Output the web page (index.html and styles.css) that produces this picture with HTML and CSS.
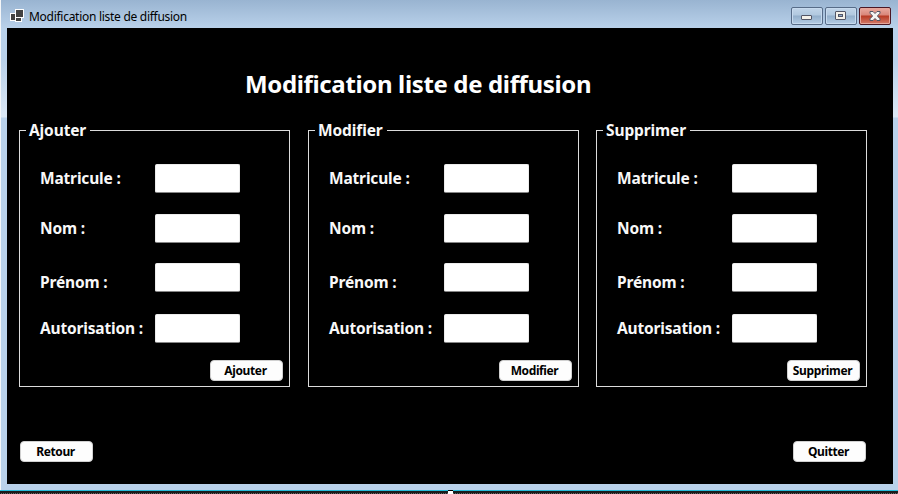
FILE: index.html
```
<!DOCTYPE html>
<html lang="fr">
<head>
<meta charset="utf-8">
<title>Modification liste de diffusion</title>
<link rel="stylesheet" href="styles.css">
</head>
<body>
<div class="window">
  <header class="titlebar">
    <svg class="app-icon" width="14" height="13" viewBox="0 0 14 13" shape-rendering="crispEdges">
      <path fill="#fff" d="M5 0h9v9h-2v4H5v-1H0V4h5z"/>
      <path fill="#424242" d="M6 1h7v7H6zM1 5h4v6H1zM6 9h5v3H6z"/>
    </svg>
    <span class="caption"><span>Modification liste de diffusion</span></span>
    <div class="controls">
      <div class="control">
        <svg width="11" height="5" viewBox="0 0 11 5"><rect x=".5" y=".5" width="10" height="4" rx=".5" fill="#f4f1ea" stroke="#535666"/></svg>
      </div>
      <div class="control max">
        <svg width="11" height="9" viewBox="0 0 11 9"><rect x=".5" y=".5" width="10" height="8" rx=".5" fill="#f4f1ea" stroke="#535666"/><rect x="3.5" y="3.5" width="4" height="2" fill="#8eabca" stroke="#535666"/></svg>
      </div>
      <div class="control close">
        <svg width="12" height="10" viewBox="0 0 12 10"><path d="M1 .5h3l2 2 2-2h3v1.7L8.400 5 11 7.800v1.700H8l-2-2-2 2H1V7.800L3.600 5 1 2.200z" fill="#f5f4f4" stroke="#535666"/></svg>
      </div>
    </div>
  </header>
  <main class="form">
    <h1 class="title"><span>Modification liste de diffusion</span></h1>
    <div class="groups">
      <section class="group">
        <h2 class="legend"><span>Ajouter</span></h2>
        <div class="row r1"><label class="lbl">Matricule :</label><input class="field"></div>
        <div class="row r2"><label class="lbl">Nom :</label><input class="field"></div>
        <div class="row r3"><label class="lbl">Prénom :</label><input class="field"></div>
        <div class="row r4"><label class="lbl">Autorisation :</label><input class="field"></div>
        <button class="btn">Ajouter</button>
      </section>
      <section class="group">
        <h2 class="legend"><span>Modifier</span></h2>
        <div class="row r1"><label class="lbl">Matricule :</label><input class="field"></div>
        <div class="row r2"><label class="lbl">Nom :</label><input class="field"></div>
        <div class="row r3"><label class="lbl">Prénom :</label><input class="field"></div>
        <div class="row r4"><label class="lbl">Autorisation :</label><input class="field"></div>
        <button class="btn">Modifier</button>
      </section>
      <section class="group">
        <h2 class="legend"><span>Supprimer</span></h2>
        <div class="row r1"><label class="lbl">Matricule :</label><input class="field"></div>
        <div class="row r2"><label class="lbl">Nom :</label><input class="field"></div>
        <div class="row r3"><label class="lbl">Prénom :</label><input class="field"></div>
        <div class="row r4"><label class="lbl">Autorisation :</label><input class="field"></div>
        <button class="btn">Supprimer</button>
      </section>
    </div>
    <footer class="actions"><button class="btn">Retour</button><button class="btn">Quitter</button></footer>
  </main>
</div>
<div class="edge"><div class="handle"></div></div>
</body>
</html>
```
FILE: styles.css
```
* { box-sizing: border-box; }
body {
  margin: 0;
  width: 898px;
  height: 494px;
  overflow: hidden;
  background: #1c1c1c;
  font-family: "Noto Sans", "Open Sans", sans-serif;
}
.window {
  height: 490px;
  padding: 0 5px 6px 7px;
  background:
    linear-gradient(#f4f6f8, #f4f6f8) 0 0 / 1px 100% no-repeat,
    linear-gradient(#99b4d1 0, #b9d1ea 28px, #b9d1ea 60px, #dce8f5 117px, #b9d1ea 118px);
}
.titlebar {
  height: 28px;
  display: flex;
  align-items: flex-start;
  padding-left: 3px;
}
.app-icon { flex: none; margin-top: 9px; }
.caption {
  margin-left: 5px;
  padding-top: 8px;
  font-size: 12px;
  line-height: 17px;
  letter-spacing: -0.28px;
  color: #000;
  flex: 1;
}
.controls { display: flex; gap: 2px; margin: 7px 2px 0 0; }
.control {
  width: 32px;
  height: 18px;
  border: 1px solid #576c88;
  border-radius: 2px;
  box-shadow: inset 0 0 0 1px #c7daee;
  background: linear-gradient(#c1d5e9 0, #b1c8df 7px, #93afcb 8px, #b8d0e8 17px);
  display: flex;
  justify-content: center;
  padding: 7px 1px 0 0;
}
.max { padding-top: 3px; }
.close {
  padding-top: 3px;
  border-color: #4b1724;
  box-shadow: inset 0 0 0 1px #e5a69b;
  background: linear-gradient(#e9aaa0 0, #d9867a 7px, #b83a24 8px, #d68373 17px);
}
.form {
  height: 456px;
  background: #000;
  padding: 0 26px 0 12px;
  color: #f8f8f8;
}
.title {
  margin: 0;
  padding: 40px 0 0 226px;
  height: 102px;
  font-size: 24px;
  line-height: 32px;
  font-weight: 700;
  letter-spacing: -0.35px;
  color: #fff;
  white-space: nowrap;
}
.groups { display: grid; grid-template-columns: 289px 288px 271px; }
.group {
  width: 271px;
  height: 257px;
  border: 1px solid #dcdcdc;
  padding-left: 20px;
}
.legend {
  width: fit-content;
  height: 22px;
  margin: -12px 0 0 -14px;
  padding: 0 4px 0 3px;
  background: #000;
  font-size: 15.5px;
  line-height: 22px;
  font-weight: 700;
  letter-spacing: -0.12px;
}
.row {
  display: grid;
  grid-template-columns: 115px 85px;
  height: 29px;
  margin-top: 21px;
}
.r1 { margin-top: 23px; }
.r3 { margin-top: 20px; }
.r4 { margin-top: 22px; }
.lbl {
  font-size: 15.5px;
  line-height: 28px;
  font-weight: 700;
  letter-spacing: -0.17px;
  white-space: nowrap;
}
.r3 .lbl { padding-top: 5px; }
.field {
  width: 85px;
  height: 29px;
  border: 1px solid #ececec;
  border-bottom-color: #868686;
  border-radius: 2px;
  background: #fff;
  padding: 0 4px;
}
.btn {
  display: block;
  width: 73px;
  height: 21px;
  padding: 0 2px 0 0;
  border: 1px solid #d0d0d0;
  border-radius: 4px;
  background: #fdfdfd;
  color: #000;
  font: 700 12px/17px "Noto Sans", "Open Sans", sans-serif;
  letter-spacing: -0.38px;
  white-space: nowrap;
}
.group .btn { margin: 17px 0 0 170px; }
.actions {
  display: flex;
  justify-content: space-between;
  margin: 54px 0 0 1px;
}
.actions .btn:last-child { margin-right: 1px; }
.edge {
  height: 4px;
  border-top: 1px solid #25bddc;
  background: repeating-linear-gradient(90deg, #1c1c1c 0 1px, #666 1px 2px) 0 2px / 100% 1px no-repeat #1c1c1c;
  padding-left: 448px;
}
.handle {
  width: 5px;
  height: 4px;
  margin-top: -1px;
  border-top: 1px solid #000;
  background: #fff;
}
```
